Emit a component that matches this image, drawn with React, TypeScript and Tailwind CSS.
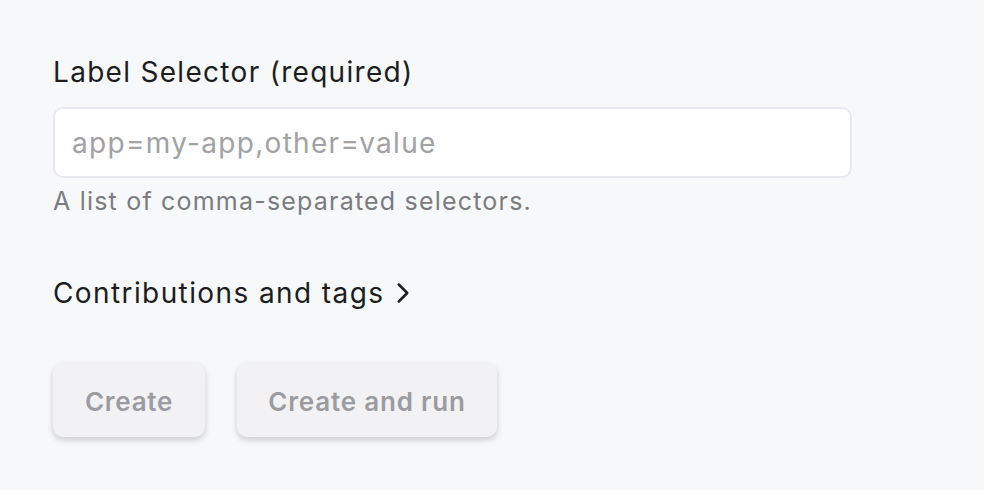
import { ChevronRight } from 'lucide-react';

export default function App() {
  return (
    <div className="min-h-screen w-full bg-[#f7f8fa] font-['Inter',sans-serif]">
      <div className="pl-[53px] pt-[54px] w-[852px]">
        {/* Label selector field */}
        <label className="block text-[28px] leading-[36px] tracking-[1.3px] text-[#1d1d1f]">Label Selector (required)</label>
        <input
          type="text"
          placeholder="app=my-app,other=value"
          className="mt-[17px] block w-[799px] h-[71px] rounded-[10px] border-2 border-[#e8e8ee] bg-white px-[17px] text-[28px] tracking-[1.3px] text-[#1d1d1f] placeholder:text-[#a1a1a6] outline-none"
        />
        <p className="mt-[7px] text-[25px] leading-[32px] tracking-[1.2px] text-[#7b7b80]">A list of comma-separated selectors.</p>

        {/* Collapsible section */}
        <button className="mt-[58px] flex items-center gap-[2px] text-[28px] leading-[36px] tracking-[1.4px] text-[#1d1d1f]">
          Contributions and tags
          <ChevronRight className="w-[34px] h-[34px]" strokeWidth={1.8} />
        </button>

        {/* Actions */}
        <div className="mt-[52px] flex gap-[32px]">
          <button
            disabled
            className="h-[74px] w-[152px] rounded-[10px] bg-[#f2f2f5] pt-[3px] text-[26px] font-semibold tracking-[0.7px] text-[#9b9ba0] shadow-[0_3px_6px_rgba(0,0,0,0.18)]"
          >
            Create
          </button>
          <button
            disabled
            className="h-[74px] w-[260px] rounded-[10px] bg-[#f2f2f5] pt-[3px] text-[26px] font-semibold tracking-[0.8px] text-[#9b9ba0] shadow-[0_3px_6px_rgba(0,0,0,0.18)]"
          >
            Create and run
          </button>
        </div>
      </div>
    </div>
  );
}
